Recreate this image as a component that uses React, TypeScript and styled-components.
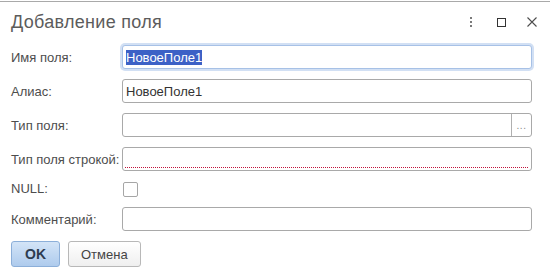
import React from "react";
import styled, { createGlobalStyle } from "styled-components";

const GlobalStyle = createGlobalStyle`
  html, body {
    margin: 0;
    padding: 0;
    background: #ffffff;
  }
  body {
    font-family: "Liberation Sans", Arial, sans-serif;
    font-size: 13px;
    color: #4d4d4d;
  }
`;

function App() {
  return (
    <Window>
      <GlobalStyle />
      <Header>
        <Title>Добавление поля</Title>
        <Controls>
          <MoreIcon>
            <span />
            <span />
            <span />
          </MoreIcon>
          <MaximizeIcon />
          <CloseIcon viewBox="0 0 10 10">
            <path d="M0.5 0.5 L9.5 9.5 M9.5 0.5 L0.5 9.5" />
          </CloseIcon>
        </Controls>
      </Header>

      <Form>
        <Label>Имя поля:</Label>
        <TextBox $focused>
          <Selected>НовоеПоле1</Selected>
        </TextBox>

        <Label>Алиас:</Label>
        <TextBox>НовоеПоле1</TextBox>

        <Label>Тип поля:</Label>
        <TextBox $withButton>
          <BoxText />
          <ChoiceButton>...</ChoiceButton>
        </TextBox>

        <Label>Тип поля строкой:</Label>
        <TextBox>
          <RequiredMark />
        </TextBox>

        <Label $short>NULL:</Label>
        <CheckRow>
          <CheckBox />
        </CheckRow>

        <Label>Комментарий:</Label>
        <TextBox />
      </Form>

      <Footer>
        <Button $primary>OK</Button>
        <Button>Отмена</Button>
      </Footer>
    </Window>
  );
}

const Window = styled.div`
  margin-top: 1px;
  border-top: 1px solid #a9a9a9;
  width: 550px;
  height: 275px;
  box-sizing: border-box;
  background: #ffffff;
`;

const Header = styled.div`
  height: 31px;
  padding: 9px 13px 0 11px;
  box-sizing: border-box;
  display: flex;
  align-items: flex-start;
  justify-content: space-between;
`;

const Title = styled.div`
  font-size: 18px;
  line-height: 22px;
  letter-spacing: 0.3px;
  color: #5c5c5c;
`;

const Controls = styled.div`
  height: 22px;
  display: flex;
  align-items: center;
`;

const MoreIcon = styled.div`
  width: 3px;
  display: flex;
  flex-direction: column;
  gap: 2px;
  margin-right: 24px;

  span {
    width: 2px;
    height: 2px;
    background: #7a7a7a;
  }
`;

const MaximizeIcon = styled.div`
  width: 9px;
  height: 9px;
  border: 1px solid #333333;
  box-sizing: border-box;
  margin-right: 21px;
`;

const CloseIcon = styled.svg`
  width: 10px;
  height: 10px;
  stroke: #4d4d4d;
  stroke-width: 1.1;
  fill: none;
`;

const Form = styled.div`
  padding: 12px 0 0 11px;
  display: grid;
  grid-template-columns: 111px 410px;
  row-gap: 10px;
  align-items: center;
`;

const Label = styled.div<{ $short?: boolean }>`
  font-size: 13px;
  line-height: ${(p) => (p.$short ? "16px" : "15px")};
  color: #4d4d4d;
  white-space: nowrap;
`;

const TextBox = styled.div<{ $focused?: boolean; $withButton?: boolean }>`
  position: relative;
  height: 24px;
  box-sizing: border-box;
  border: 1px solid ${(p) => (p.$focused ? "#a7c1e6" : "#a9a9a9")};
  border-radius: 3px;
  box-shadow: ${(p) => (p.$focused ? "0 0 0 2px #d2e0f4" : "none")};
  background: #ffffff;
  display: flex;
  align-items: center;
  padding: ${(p) => (p.$withButton ? "0" : "0 3px")};
  font-size: 13px;
  line-height: 15px;
  color: #333333;
  white-space: nowrap;
  overflow: hidden;
`;

const BoxText = styled.div`
  flex: 1;
`;

const Selected = styled.span`
  background: #3c61c6;
  color: #ffffff;
`;

const ChoiceButton = styled.div`
  width: 20px;
  height: 100%;
  border-left: 1px solid #b0b0b0;
  display: flex;
  align-items: flex-end;
  justify-content: center;
  padding-bottom: 5px;
  box-sizing: border-box;
  font-size: 10px;
  line-height: 10px;
  color: #8a8a8a;
  letter-spacing: 0.5px;
`;

const RequiredMark = styled.div`
  position: absolute;
  left: 2px;
  right: 3px;
  bottom: 2px;
  height: 1px;
  background-image: linear-gradient(to right, #c0143c 50%, transparent 50%);
  background-size: 2px 1px;
`;

const CheckRow = styled.div`
  height: 16px;
  display: flex;
  align-items: center;
`;

const CheckBox = styled.div`
  width: 15px;
  height: 15px;
  margin-left: 1px;
  box-sizing: border-box;
  border: 1px solid #a6a6a6;
  border-radius: 2px;
  background: #ffffff;
`;

const Footer = styled.div`
  padding: 10px 0 0 11px;
  display: flex;
  gap: 8px;
`;

const Button = styled.div<{ $primary?: boolean }>`
  height: 26px;
  box-sizing: border-box;
  padding: 0 ${(p) => (p.$primary ? "13px" : "12px")};
  min-width: ${(p) => (p.$primary ? "47px" : "72px")};
  display: flex;
  align-items: center;
  justify-content: center;
  border-radius: 3px;
  border: 1px solid ${(p) => (p.$primary ? "#8cafd9" : "#b8b8b8")};
  background: ${(p) =>
    p.$primary
      ? "linear-gradient(#d3e4f7, #aecbed)"
      : "linear-gradient(#ffffff, #efefef)"};
  font-size: ${(p) => (p.$primary ? "14px" : "13px")};
  font-weight: ${(p) => (p.$primary ? "bold" : "normal")};
  color: ${(p) => (p.$primary ? "#2d3c50" : "#444444")};
`;

export default App;
